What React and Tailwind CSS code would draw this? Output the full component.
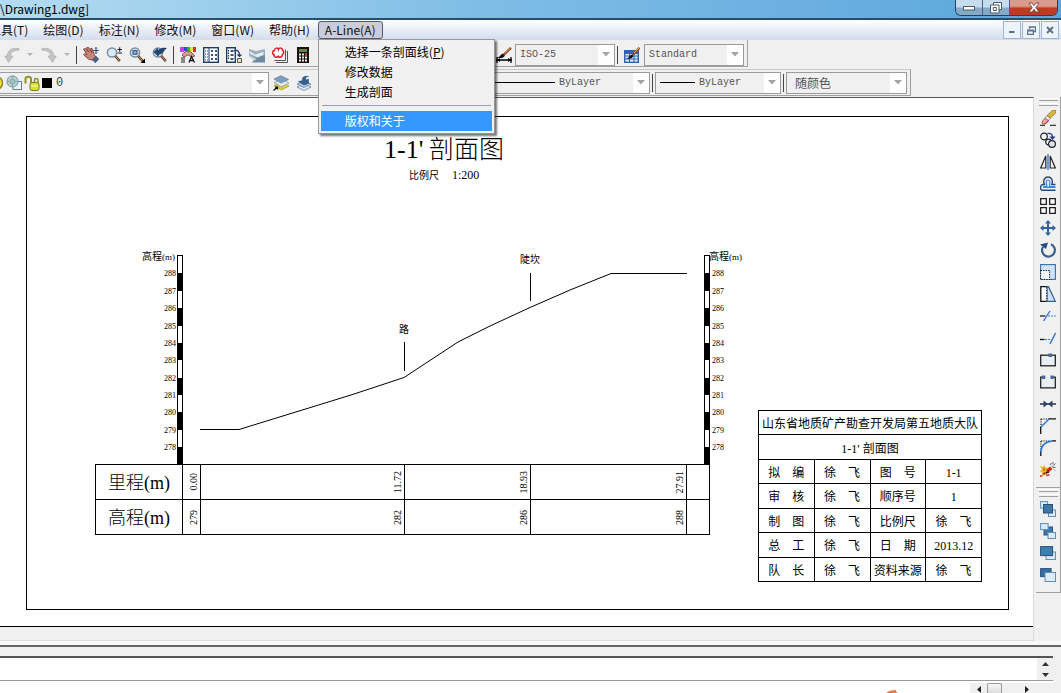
import React from "react";

const ink = "#1d2733";

/* ---------- icons: every one is drawn on a 16 x 16 grid ---------- */

function Icon({ children, size = 16 }) {
  return (
    <svg width={size} height={size} viewBox="0 0 16 16" fill="none" className="shrink-0">
      {children}
    </svg>
  );
}

const Magnifier = () => (
  <>
    <circle cx="6" cy="5.5" r="4.6" fill="#dbe9f4" stroke="#7b8ea0" strokeWidth="1.5" />
    <path d="M9.2 9l4.6 5.2" stroke="#5f4632" strokeWidth="2.6" />
    <path d="M9.6 9.4l3.8 4.2" stroke="#c98d55" strokeWidth="1" />
  </>
);

const icons = {
  undo: (
    <path d="M15 1.500C8 .5 3.500 3 3.300 9H.7l3.800 6.500L9 9H6.500C6.500 5.500 9.500 3 15 3.200z" fill="#c4c4c4" stroke="#a6a6a6" strokeWidth=".6" />
  ),
  redo: (
    <path d="M1 1.500c7-1 11.500 1.500 11.700 7.500h2.600l-3.800 6.500L7 9h2.500C9.500 5.500 6.500 3 1 3.200z" fill="#c4c4c4" stroke="#a6a6a6" strokeWidth=".6" />
  ),
  pan: (
    <>
      <path d="M0.500 2l2-.5 3 3.500L3.500.8l1.800-.6 3.500 5.600L7.500 1.600l1.500-.3 2.300 6.500 1.700 2-3.500 3.400-4-1-5-4.500 1-1 2.500 1.300z" fill="#c98577" stroke="#6d352c" strokeWidth=".8" />
      <path d="M9.500 12.500l3.600-3.200 2.700 3-3.600 3.500z" fill="#46648f" stroke="#2c4468" strokeWidth=".6" />
      <path d="M13 .5v6M10.200 3.500h5.600M12 1.500l1-1 1 1M12 5.500l1 1 1-1" stroke="#2b4a77" strokeWidth="1" />
    </>
  ),
  zoomRealtime: (
    <>
      <Magnifier />
      <path d="M11.500 2.500h4.500M13.700.3v4.400M11.500 6h4.500" stroke={ink} strokeWidth="1.100" />
    </>
  ),
  zoomWindow: (
    <>
      <Magnifier />
      <rect x="4" y="3.600" width="4" height="3.600" fill="#8fb0d4" stroke="#24477c" strokeWidth="1" />
      <path d="M16 11.500V16h-4.500z" fill="#000" />
    </>
  ),
  zoomPrevious: (
    <>
      <Magnifier />
      <path d="M1.500 5L6 .8v2.200c3.500-2.500 6.500-2.500 9-1.800-2.500.8-3 5.300-7.500 6.300L6 9.500z" fill="#24456f" />
    </>
  ),
  properties: (
    <>
      <path d="M0 0h4v5H0z" fill="#d43de0" />
      <path d="M4 0h3v4H4z" fill="#3048e0" />
      <path d="M7 0h3v4H7z" fill="#2eb52e" />
      <path d="M10 0h3v4h-3z" fill="#f0df2a" />
      <path d="M13 0h3v5h-3z" fill="#e62b2b" />
      <path d="M2 8l4-4 5 1 4 4-3 1-4-2-4 2z" fill="#d99a86" stroke="#7f3f33" strokeWidth=".8" />
      <path d="M1 11h4M1 13h4M1 15h4" stroke="#222" strokeWidth="1" />
      <path d="M9 15.500l2.500-6 3 6M10 13.500h3.600" stroke="#111" strokeWidth="1.300" />
    </>
  ),
  designCenter: (
    <>
      <rect x=".7" y=".7" width="14.600" height="14.600" fill="#fff" stroke="#1d3c66" strokeWidth="1.400" />
      <path d="M6 1v14" stroke="#1d3c66" />
      <path d="M2 4h3M2 7h3M2 10h3M2 13h3" stroke="#1d3c66" strokeDasharray="1 1" />
      <path d="M8 3h2v2H8zM12 3h2v2h-2zM8 7h2v2H8zM12 7h2v2h-2zM8 11h2v2H8zM12 11h2v2h-2z" fill="#31578a" />
    </>
  ),
  toolPalettes: (
    <>
      <path d="M.7.7h8.600v14.600H.7z" fill="#fff" stroke="#1d3c66" strokeWidth="1.400" />
      <path d="M2.500 3v10" stroke="#1d3c66" strokeDasharray="1.500 1" />
      <path d="M4.500 3h3v2h-3zM4.500 7h3v2h-3zM4.500 11h3v2h-3z" fill="#31578a" />
      <path d="M8 4c4-2 5.500 1 5.500 5M11.500 7.500l2 2 2-2" stroke="#1d3c66" strokeWidth="1.200" />
      <path d="M11.500 11.500h4v4h-4z" fill="#efe3a5" stroke="#555" />
    </>
  ),
  sheetSet: (
    <>
      <path d="M0 2l7 2 9-2v13H8L0 9z" fill="#9cb3c2" />
      <path d="M0 3l6 4 9-3v4l-6 3-9-4z" fill="#e3eaee" stroke="#8398a8" strokeWidth=".7" />
      <path d="M7 11l9-3v7.500H3z" fill="#6a8ba3" />
      <path d="M0 9l7 4" stroke="#c6d2da" strokeWidth="1.200" />
    </>
  ),
  markup: (
    <>
      <path d="M4 15.500h11.500V4M2.500 13.500h11V2.500" stroke="#555" strokeWidth="1" />
      <path d="M2.500 3.500c0-3 3.500-3 4-1 1-2.500 4.500-1.500 4 1 1.800 1 1.600 3.500-.3 4 .5 2.500-2.700 3.500-4 1.700-1.500 2-4.700 1-4-1.500C-.2 7 0 4 2.500 3.500z" fill="#fff" stroke="#e01f2d" strokeWidth="1.500" />
    </>
  ),
  calculator: (
    <>
      <rect x="2" y="0" width="12" height="16" fill="#1a1010" />
      <rect x="4" y="2" width="8" height="3" fill="#5d8a3c" />
      <path d="M4 7.500h8M4 10.500h8M4 13.500h8" stroke="#f2eded" strokeWidth="1.800" strokeDasharray="2 1" />
      <path d="M10 6.600h2v1.800h-2z" fill="#d23" />
    </>
  ),
  dimStyle: (
    <>
      <path d="M0 13h16M1 10v6M15 10v6" stroke="#000" strokeWidth="1.300" />
      <path d="M1 13l3-2v4zM15 13l-3-2v4z" fill="#000" />
      <path d="M1 10.500c3 0 3-3 6-4l2 2c-2 3-4 3-8 2z" fill="#111" />
      <path d="M8 7.500L15 .8" stroke="#8c4a1e" strokeWidth="2.400" />
      <path d="M9 6l5.500-5" stroke="#e9a35f" strokeWidth=".8" />
    </>
  ),
  tableStyle: (
    <>
      <rect x=".7" y="3.700" width="13.600" height="11.600" fill="#dbe9fa" stroke="#2f62b5" strokeWidth="1.400" />
      <path d="M1 5.500h13" stroke="#2f62b5" strokeWidth="3" />
      <path d="M1 9h13M1 12h13M5.500 5v10M10 5v10" stroke="#2f62b5" />
      <path d="M2 11.500c3 0 3-3 6-4l1.500 1.500c-2 3-4 3-7.500 2.500z" fill="#111" />
      <path d="M8.500 8L15.500.8" stroke="#8c4a1e" strokeWidth="2.400" />
      <path d="M10 6l5-5" stroke="#f0b35f" strokeWidth="1" />
    </>
  ),
  sun: (
    <circle cx="8" cy="8" r="6.500" fill="#f4e13c" stroke="#8e8b2f" strokeWidth="1.600" />
  ),
  freeze: (
    <>
      <rect x="7" y="6.500" width="8.500" height="8" fill="#eef3f6" stroke="#69829a" />
      <circle cx="6.500" cy="6.500" r="5.500" fill="#b9d6cf" stroke="#8fa9b5" strokeWidth="1.300" />
      <circle cx="6.500" cy="6.500" r="2.600" fill="#9cc4bb" stroke="#7fa5ac" strokeWidth=".9" />
      <path d="M6.500 1.500v2M6.500 9.500v2M1.500 6.500h2M9.500 6.500h2" stroke="#7198a5" strokeWidth=".9" />
    </>
  ),
  unlock: (
    <>
      <path d="M1.500 8.500V4C1.500 1 7 1 7 4v5" stroke="#8f9428" strokeWidth="2" />
      <rect x="6" y="7.500" width="9" height="8" rx="2" fill="#d7df31" stroke="#767b1e" />
      <path d="M10.500 7.500V5c0-2 3.500-2 3.500 0v3" stroke="#8f9428" strokeWidth="1.600" />
      <path d="M7 11h7" stroke="#f7f8a3" strokeWidth="1.200" />
    </>
  ),
  layerManager: (
    <>
      <path d="M1 10.500L9 7l7 4-7.500 4z" fill="#e3cf2f" stroke="#9c8c16" strokeWidth=".6" />
      <path d="M1 7.500L9 4l7 4-7.500 4z" fill="#dfeaf5" stroke="#67829f" strokeWidth=".6" />
      <path d="M1 4L8 .7l7.500 3.800L8 8z" fill="#7f9fbe" stroke="#4f6f90" strokeWidth=".6" />
      <path d="M.5 15.500L4.500 12M2 12h2.500v2.500" stroke="#000" strokeWidth="1.200" />
    </>
  ),
  layerPrevious: (
    <>
      <path d="M1 12l7-3.500 7 3.500-7 3.500z" fill="#dfeaf5" stroke="#67829f" strokeWidth=".8" />
      <path d="M1 9l7-3.500L15 9l-7 3.500z" fill="#b7cde2" stroke="#67829f" strokeWidth=".8" />
      <path d="M2.500 6.500L7 5.500C5 3 8 .5 12.500 1.500c-3 .3-3.500 2-2 3.500L12.500 4v4.500L8 10z" fill="#33608f" stroke="#234468" strokeWidth=".5" />
    </>
  ),

  erase: (
    <>
      <path d="M0 15.300h16" stroke="#111" strokeWidth="1" strokeDasharray="5 5 6" />
      <path d="M2 12l3-4 3.500 2.500-3 3.500H2.500z" fill="#f3a7a2" stroke="#9d3f3a" strokeWidth=".8" />
      <path d="M5 8l2-2.500L10.300 8 8.500 10.500z" fill="#eee" stroke="#555" strokeWidth=".6" />
      <path d="M7 5.500L13 0h3v2.500L10.300 8z" fill="#d9b83a" stroke="#7d661a" strokeWidth=".7" />
      <path d="M5 13.500l4-3" stroke="#d22" />
    </>
  ),
  copy: (
    <>
      <circle cx="4" cy="4.500" r="3.300" stroke="#222" strokeWidth="1.200" fill="#edf2f6" />
      <circle cx="8.500" cy="10" r="2.800" stroke="#222" strokeWidth="1.200" fill="#edf2f6" />
      <circle cx="12" cy="12" r="3.400" stroke="#222" strokeWidth="1.200" fill="#dce5ee" />
      <path d="M7.500 1.500c3-.5 5 .5 5 4" stroke="#1f3c8a" strokeWidth="1.400" />
      <path d="M9.500 4.500h6l-3 3.500z" fill="#1f3c8a" />
    </>
  ),
  mirror: (
    <>
      <path d="M5.800 2v12H.7zM10.200 2v12h5.100z" fill="#f4f6f8" stroke="#222" strokeWidth="1.200" />
      <path d="M8 0v16" stroke="#2a6fd0" strokeWidth="1.300" />
    </>
  ),
  offset: (
    <>
      <path d="M15.500 14.300H2.500C-.3 14.300 0 8.500 3 8.500h1.500C2.500 4 5 1 8 1s5.500 3 3.800 7.500h3.700" stroke="#27486e" strokeWidth="1.400" />
      <path d="M15.500 11.500H4c-.8 0-.8-.8 0-.8h3C6 6.500 5.800 4 8 4s2.300 2.500 1.300 6.700h6.200" stroke="#2e86e8" strokeWidth="1.200" />
    </>
  ),
  array: (
    <path d="M.7.7h5.600v5.600H.7zM9.700.7h5.600v5.600H9.700zM.7 9.700h5.600v5.600H.7zM9.700 9.700h5.600v5.600H9.700z" fill="#fff" stroke="#222" strokeWidth="1.300" />
  ),
  move: (
    <path d="M8 0l3 3.500H9v3.500h3.500V5L16 8l-3.500 3V9H9v3.500h2L8 16l-3-3.500h2V9H3.500v2L0 8l3.500-3v2H7V3.500H5z" fill="#33619b" />
  ),
  rotate: (
    <>
      <path d="M11 2.300A6.400 6.400 0 1 1 3 4.800" stroke="#37608f" strokeWidth="2.200" />
      <path d="M0 2.500L8 .5 6 7z" fill="#254b80" />
    </>
  ),
  scale: (
    <>
      <rect x=".6" y=".6" width="14.800" height="14.800" fill="#cfe3f6" stroke="#3a6ea5" strokeWidth="1.100" />
      <rect x=".6" y="6.500" width="9" height="9" fill="#f3f6f8" stroke="#111" strokeWidth="1.100" strokeDasharray="1.300 1.200" />
    </>
  ),
  stretch: (
    <>
      <path d="M7 .7h1.500l6.800 14.600H7z" fill="#cfe3f6" stroke="#2e5f98" strokeWidth="1.200" />
      <path d="M6.700.7H.8v14.600h5.900" fill="#fff" stroke="#111" strokeWidth="1.300" />
      <path d="M6.700 1v14" stroke="#111" strokeDasharray="1.500 1.200" />
    </>
  ),
  trim: (
    <>
      <path d="M0 8h5.500" stroke="#111" strokeWidth="1.200" />
      <path d="M8 8h8" stroke="#2a7ad8" strokeWidth="1.200" strokeDasharray="2 1.200" />
      <path d="M3.500 13L10 3" stroke="#2a6fc8" strokeWidth="1.300" />
    </>
  ),
  extend: (
    <>
      <path d="M0 9.500h4.500" stroke="#111" strokeWidth="1.300" />
      <path d="M5 9.500h6" stroke="#2a7ad8" strokeWidth="1.200" strokeDasharray="2 1.200" />
      <path d="M10 14l5.500-11" stroke="#2a6fc8" strokeWidth="1.400" />
    </>
  ),
  breakAtPoint: (
    <>
      <rect x=".7" y="3.200" width="14.600" height="10.600" fill="#e9eef4" stroke="#222" strokeWidth="1.300" />
      <path d="M8.500 1.500h3.500v3.500H8.500z" fill="#4a679a" />
    </>
  ),
  breakLine: (
    <>
      <path d="M3 3.200H.7v10.600h14.600V3.200H13" fill="#e9eef4" stroke="#222" strokeWidth="1.300" />
      <path d="M2 1.500h3.300v3.500H2zM10.500 1.500h3.300v3.500h-3.300z" fill="#4a679a" />
    </>
  ),
  join: (
    <>
      <path d="M0 8h16" stroke="#222" strokeWidth="1.400" />
      <path d="M3.500 4.500L8 8l-4.500 3.500zM12.500 4.500L8 8l4.500 3.500z" fill="#28466f" />
    </>
  ),
  chamfer: (
    <>
      <path d="M1 1h9M1 1v9" stroke="#111" strokeWidth="1.200" strokeDasharray="1.200 1.200" />
      <path d="M.7 16V9M9 .9h7" stroke="#111" strokeWidth="1.300" />
      <path d="M1 9l8-8" stroke="#2a7ad8" strokeWidth="1.500" />
    </>
  ),
  fillet: (
    <>
      <path d="M1 1h9M1 1v9" stroke="#111" strokeWidth="1.200" strokeDasharray="1.200 1.200" />
      <path d="M.8 16v-5M12 .9h4" stroke="#111" strokeWidth="1.300" />
      <path d="M1 12C1 6 5 2 12 1" stroke="#2a7ad8" strokeWidth="1.600" />
    </>
  ),
  explode: (
    <>
      <path d="M0 4l3 1 1.500-2L6 6l3-1-1 3 1 2-2 1 1 3-3-1.500L2 15l.5-4L0 9l2-1.500z" fill="#e8b62a" />
      <path d="M3 6l2 1-1 2zM2 12l3-2v3zM6 12l2 1-1 2z" fill="#c8281c" />
      <path d="M6 8.500l4-4 2.500 2.500-4.500 4z" fill="#c8281c" />
      <path d="M5.500 11l3.500-1" stroke="#3a1d10" strokeWidth="1.500" />
      <path d="M10 3l1.500-2M13 0v2.500M15.500 1.500l-2 2M15.500 5.500l-2-.5M11.500 4l2.500 2M14 7.500l1 1" stroke="#555" strokeWidth=".9" />
      <path d="M0 14h2M8 13h1.500" stroke="#c8281c" strokeWidth="1.500" />
    </>
  ),
  bringFront: (
    <>
      <rect x=".6" y=".6" width="7" height="6.500" fill="#dcebf6" stroke="#5f8fb8" />
      <rect x="8.500" y="9" width="7" height="6.500" fill="#dcebf6" stroke="#5f8fb8" />
      <rect x="3.500" y="3.500" width="9" height="8.500" fill="#3f76a8" stroke="#28527c" />
    </>
  ),
  sendBack: (
    <>
      <rect x="4" y="4" width="8.500" height="8" fill="#3f76a8" stroke="#28527c" />
      <rect x=".6" y=".6" width="7.500" height="6" fill="#dcebf6" stroke="#5f8fb8" />
      <rect x="8" y="9.500" width="7.500" height="6" fill="#dcebf6" stroke="#5f8fb8" />
    </>
  ),
  bringAbove: (
    <>
      <rect x="6" y="7" width="9.500" height="7.500" fill="#dcebf6" stroke="#5f8fb8" />
      <rect x=".6" y="1.600" width="12" height="9" fill="#3f7fae" stroke="#28527c" />
    </>
  ),
  sendUnder: (
    <>
      <rect x=".6" y="1.600" width="10.500" height="8" fill="#3a6a9e" stroke="#28527c" />
      <rect x="5" y="5.500" width="10.500" height="9" fill="#dcebf6" stroke="#5f8fb8" />
    </>
  ),
};

function ToolButton({ icon, label }) {
  return (
    <button type="button" aria-label={label} className="flex h-[22px] w-[23px] shrink-0 items-center justify-center">
      <Icon>{icons[icon]}</Icon>
    </button>
  );
}

function CaretButton({ label }) {
  return (
    <button type="button" aria-label={label} className="flex h-[22px] w-[14px] shrink-0 items-center justify-center">
      <svg width="6" height="3" viewBox="0 0 6 3"><path d="M0 0h6L3 3z" fill="#b5b5b5" /></svg>
    </button>
  );
}

const Divider = () => <div className="mx-[2px] h-[18px] w-px shrink-0 bg-[#444]" />;

function Combo({ label, value, width, line, cjk }) {
  return (
    <div className={"flex h-[22px] shrink-0 items-center border border-[#9b9b9b] bg-white " + width}>
      <div className="flex h-full min-w-0 flex-1 items-center bg-[#f0f0f0] pl-1">
        {line && <div className={"mr-1 h-px shrink-0 bg-black " + line} />}
        <select
          aria-label={label}
          className={
            "min-w-0 flex-1 appearance-none bg-transparent text-[#555] outline-none " +
            (cjk ? "pl-1 font-['Noto_Sans_CJK_SC',sans-serif] text-[12px]" : "font-['Liberation_Mono',monospace] text-[10px]")
          }
        >
          <option>{value}</option>
        </select>
      </div>
      <svg width="16" height="5" viewBox="0 0 16 5" className="shrink-0"><path d="M4 0h8L8 4.500z" fill="#a3a3a3" /></svg>
    </div>
  );
}

/* ---------- title bar and menus ---------- */

function TitleBar() {
  return (
    <header className="flex h-5 shrink-0 items-start justify-between border-b-2 border-[#2b4d6c] bg-linear-to-r from-[#b4dcf1] via-[#7fbde6] via-45% to-[#5ba5dc]">
      <h1 className="min-w-0 flex-1 truncate text-[12px] leading-[17px] text-black">\Drawing1.dwg]</h1>
      <div className="mr-[3px] flex h-4 overflow-hidden rounded-b-md border border-t-0 border-[#25415c]">
        <button type="button" aria-label="最小化" className="flex w-[27px] items-center justify-center border-r border-[#47637d] bg-linear-to-b from-[#c5dcec] from-45% to-[#84a9c8] to-55%">
          <svg width="12" height="6" viewBox="0 0 12 6"><rect x=".5" y="1.500" width="11" height="3.500" fill="#fff" stroke="#4c5a68" /></svg>
        </button>
        <button type="button" aria-label="还原" className="flex w-[27px] items-center justify-center border-r border-[#47637d] bg-linear-to-b from-[#c5dcec] from-45% to-[#84a9c8] to-55%">
          <svg width="12" height="12" viewBox="0 0 12 12" fill="#fff" stroke="#4c5a68">
            <path d="M3.500.5h8v7h-8z" /><path d="M.5 3h8.500v8H.5z" /><path d="M3.300 5.500h3v3h-3z" />
          </svg>
        </button>
        <button type="button" aria-label="关闭" className="flex w-[47px] items-center justify-center bg-linear-to-b from-[#dc9a8c] from-40% to-[#bf3a1f] to-55%">
          <svg width="12" height="11" viewBox="0 0 12 11"><path d="M1 1h3l2 2.600L8 1h3L7.800 5.500 11 10H8L6 7.400 4 10H1l3.200-4.500z" fill="#fff" stroke="#6b3a34" strokeWidth=".8" /></svg>
        </button>
      </div>
    </header>
  );
}

const menus = ["工具(T)", "绘图(D)", "标注(N)", "修改(M)", "窗口(W)", "帮助(H)"];
const mdiButton = "flex h-[18px] w-[18px] items-center justify-center border border-[#9fb6cc] bg-[#edf3fb]";

function MenuBar() {
  return (
    <div className="flex h-5 shrink-0 items-center justify-between bg-linear-to-b from-white via-[#e8edf7] to-[#d3dcee] text-[12px] leading-[18px] text-[#111]">
      <nav className="-ml-[18px] flex items-center gap-px">
        {menus.map((m) => (
          <button key={m} type="button" className="shrink-0 px-[7px] whitespace-nowrap">{m}</button>
        ))}
        <div className="relative">
          <button type="button" aria-expanded="true" className="block h-[18px] rounded-[3px] border border-[#555a68] bg-[#c9cddb] px-[6px] leading-4 whitespace-nowrap">
            A-Line(A)
          </button>
          <div role="menu" className="absolute top-[18px] left-0 z-10 w-[177px] border border-[#979797] bg-[#f1f1f1] px-[2px] pt-[2px] pb-[2px] shadow-[2px_2px_2px_rgba(0,0,0,0.55)]">
            <MenuItem>选择一条剖面线(<u>P</u>)</MenuItem>
            <MenuItem>修改数据</MenuItem>
            <MenuItem>生成剖面</MenuItem>
            <hr className="mx-px mt-[3px] mb-[5px] border-[#a0a0a0]" />
            <MenuItem active>版权和关于</MenuItem>
          </div>
        </div>
      </nav>
      <div className="mr-[2px] flex gap-px">
        <button type="button" aria-label="最小化图形" className={mdiButton}>
          <svg width="8" height="8" viewBox="0 0 8 8"><path d="M1 6h5.500" stroke="#5c7288" strokeWidth="2" /></svg>
        </button>
        <button type="button" aria-label="还原图形" className={mdiButton}>
          <svg width="9" height="9" viewBox="0 0 9 9" fill="none" stroke="#5c7288"><path d="M2.500 3V1h6v4.500H6.500" strokeWidth="1.300" /><path d="M.6 4h5.800v4.400H.6zM.6 4.800h5.800" strokeWidth="1.200" /></svg>
        </button>
        <button type="button" aria-label="关闭图形" className={mdiButton}>
          <svg width="8" height="8" viewBox="0 0 8 8"><path d="M1 1l6 6M7 1L1 7" stroke="#5c7288" strokeWidth="2" /></svg>
        </button>
      </div>
    </div>
  );
}

function MenuItem({ active, children }) {
  return (
    <button
      type="button"
      role="menuitem"
      className={"block h-5 w-full pl-6 text-left leading-5 whitespace-nowrap " + (active ? "bg-[#3399ff] text-white" : "text-black")}
    >
      {children}
    </button>
  );
}

/* ---------- toolbars ---------- */

function Toolbars() {
  return (
    <div className="shrink-0 bg-[#f0f0f0]">
      <div className="flex h-[27px] w-fit items-center border-r border-b border-[#a0a0a0] pt-[3px] pr-[3px]">
        <ToolButton icon="undo" label="放弃" />
        <CaretButton label="放弃列表" />
        <ToolButton icon="redo" label="重做" />
        <CaretButton label="重做列表" />
        <Divider />
        <ToolButton icon="pan" label="实时平移" />
        <ToolButton icon="zoomRealtime" label="实时缩放" />
        <ToolButton icon="zoomWindow" label="窗口缩放" />
        <ToolButton icon="zoomPrevious" label="缩放上一个" />
        <Divider />
        <ToolButton icon="properties" label="特性" />
        <ToolButton icon="designCenter" label="设计中心" />
        <ToolButton icon="toolPalettes" label="工具选项板" />
        <ToolButton icon="sheetSet" label="图纸集管理器" />
        <ToolButton icon="markup" label="标记集管理器" />
        <ToolButton icon="calculator" label="快速计算器" />
        <div className="w-[178px] shrink-0" />
        <ToolButton icon="dimStyle" label="标注样式" />
        <Combo label="标注样式控制" value="ISO-25" width="w-[100px]" />
        <Divider />
        <ToolButton icon="tableStyle" label="表格样式" />
        <Combo label="表格样式控制" value="Standard" width="w-[100px] ml-px" />
      </div>
      <div className="mt-[2px] flex h-[27px] w-fit items-center border-t border-r border-b border-t-[#c8c8c8] border-[#a0a0a0] pr-[3px]">
        <div className="flex h-[22px] w-[269px] shrink-0 items-center border border-l-0 border-[#9b9b9b] bg-white">
          <div className="flex h-full flex-1 items-center overflow-hidden bg-[#f0f0f0]">
            <div className="-ml-[12px] flex items-center gap-[2px]">
              <Icon>{icons.sun}</Icon>
              <Icon>{icons.freeze}</Icon>
              <Icon>{icons.unlock}</Icon>
              <div className="h-[10px] w-[10px] bg-black" />
            </div>
            <select aria-label="图层控制" className="ml-1 min-w-0 flex-1 appearance-none bg-transparent font-['Liberation_Mono',monospace] text-[12px] text-[#444] outline-none">
              <option>0</option>
            </select>
          </div>
          <svg width="16" height="5" viewBox="0 0 16 5" className="shrink-0"><path d="M4 0h8L8 4.500z" fill="#a3a3a3" /></svg>
        </div>
        <ToolButton icon="layerManager" label="图层特性管理器" />
        <ToolButton icon="layerPrevious" label="上一个图层" />
        <div className="w-[165px] shrink-0" />
        <Combo label="线型控制" value="ByLayer" width="w-[170px]" line="w-[70px]" />
        <Divider />
        <Combo label="线宽控制" value="ByLayer" width="w-[126px]" line="w-[35px]" />
        <Divider />
        <Combo label="打印样式控制" value="随颜色" width="w-[121px]" cjk />
      </div>
    </div>
  );
}

const modifyTools = [
  ["erase", "删除"], ["copy", "复制"], ["mirror", "镜像"], ["offset", "偏移"], ["array", "阵列"],
  ["move", "移动"], ["rotate", "旋转"], ["scale", "缩放"], ["stretch", "拉伸"], ["trim", "修剪"],
  ["extend", "延伸"], ["breakAtPoint", "打断于点"], ["breakLine", "打断"], ["join", "合并"],
  ["chamfer", "倒角"], ["fillet", "圆角"], ["explode", "分解"],
];
const orderTools = [["bringFront", "前置"], ["sendBack", "后置"], ["bringAbove", "置于对象之上"], ["sendUnder", "置于对象之下"]];

const Grip = () => (
  <div className="my-px flex w-[19px] flex-col gap-[2px]">
    <div className="h-[3px] border-t border-b border-t-white border-b-[#a0a0a0]" />
    <div className="h-[3px] border-t border-b border-t-white border-b-[#a0a0a0]" />
  </div>
);

function ToolColumn({ tools }) {
  return (
    <div className="flex flex-col items-center border-r border-b border-[#a0a0a0] pb-[6px]">
      <Grip />
      {tools.map(([icon, label]) => <ToolButton key={icon} icon={icon} label={label} />)}
    </div>
  );
}

/* ---------- drawing ---------- */

const levels = [288, 287, 286, 285, 284, 283, 282, 281, 280, 279, 278];
const levelY = (v) => Math.round(464.5 - (v - 277) * 17.37);

function ElevationScale({ x, labelX }) {
  return (
    <g>
      <rect x={x + 0.5} y="255.5" width="5" height="209" fill="#fff" stroke="#000" />
      {levels.filter((v) => v % 2 === 0).map((v) => (
        <rect key={v} x={x} y={levelY(v)} width="6" height={levelY(v - 1) - levelY(v)} fill="#000" />
      ))}
      {levels.map((v) => (
        <text key={v} x={labelX} y={levelY(v) + 3} fontSize="8">{v}</text>
      ))}
    </g>
  );
}

function Profile() {
  return (
    <svg width="1033" height="528" viewBox="0 98 1033 528" className="absolute top-0 left-0 font-['Liberation_Serif','Noto_Sans_CJK_SC',serif]" fill="#000">
      <text x="384" y="158" fontSize="26">1-1'</text>
      <text x="429" y="158" fontSize="25" fontWeight="300">剖面图</text>
      <text x="409" y="179" fontSize="10">比例尺</text>
      <text x="452" y="179" fontSize="12">1:200</text>

      <text x="142" y="260" fontSize="10">高程</text>
      <text x="162" y="260" fontSize="9">(m)</text>
      <text x="709" y="260" fontSize="10">高程</text>
      <text x="729" y="260" fontSize="9">(m)</text>
      <ElevationScale x={177} labelX={164} />
      <ElevationScale x={704} labelX={712} />

      <polyline
        points="200,429.500 239,429.500 351,395 404,377.500 458,342 490,326 530,307.500 570,290 611,273.500 687,273.500"
        fill="none"
        stroke="#000"
      />
      <path d="M404.500 342v29M530.500 273v28" stroke="#000" />
      <text x="399" y="333" fontSize="10">路</text>
      <text x="520" y="263" fontSize="10">陡坎</text>
    </svg>
  );
}

const stationRows = [
  ["里程", ["0.00", "11.72", "18.93", "27.91"]],
  ["高程", ["279", "282", "286", "288"]],
];

function StationTable() {
  return (
    <table className="absolute top-[366px] left-[95px] w-[615px] table-fixed border-collapse">
      <colgroup>
        <col className="w-[87px]" /><col className="w-[18px]" /><col className="w-[204px]" />
        <col className="w-[126px]" /><col className="w-[156px]" /><col className="w-[23px]" />
      </colgroup>
      <tbody>
        {stationRows.map(([name, values]) => (
          <tr key={name} className="h-[35px]">
            <th scope="row" className="border border-black p-0 pt-[2px] text-center font-['Liberation_Serif','Noto_Sans_CJK_SC',serif] text-[18px] leading-[18px] font-light">
              {name}(m)
            </th>
            {values.map((v) => (
              <td key={v} className="border border-black p-0 align-middle">
                <span className="ml-auto block w-3 rotate-180 text-center font-['Liberation_Serif',serif] text-[10px] leading-3 [writing-mode:vertical-rl]">{v}</span>
              </td>
            ))}
            <td className="border border-black p-0" />
          </tr>
        ))}
      </tbody>
    </table>
  );
}

const blockRows = [
  ["拟　编", "徐　飞", "图　号", "1-1"],
  ["审　核", "徐　飞", "顺序号", "1"],
  ["制　图", "徐　飞", "比例尺", "徐　飞"],
  ["总　工", "徐　飞", "日　期", "2013.12"],
  ["队　长", "徐　飞", "资料来源", "徐　飞"],
];
const blockCell = "border border-black p-0 pt-[3px] text-center font-normal whitespace-nowrap";

function TitleBlock() {
  return (
    <table className="absolute top-[312px] left-[758px] h-[172px] w-[224px] table-fixed border-collapse font-['Liberation_Serif','Noto_Sans_CJK_SC',serif] text-[12px] leading-4">
      <tbody>
        <tr className="h-6"><th colSpan={4} className={blockCell}>山东省地质矿产勘查开发局第五地质大队</th></tr>
        <tr className="h-6"><th colSpan={4} className={blockCell}>1-1′ 剖面图</th></tr>
        {blockRows.map((row) => (
          <tr key={row[0]} className="h-6">
            {row.map((text, i) => <td key={i} className={blockCell}>{text}</td>)}
          </tr>
        ))}
      </tbody>
    </table>
  );
}

function DrawingArea() {
  return (
    <main className="flex min-w-0 flex-1 flex-col border-t border-r border-[#555] border-r-[#d9d9d9] bg-[#f0f0f0]">
      <div className="relative flex min-h-0 flex-1 overflow-hidden border-b border-black bg-white pt-[18px] pr-6 pb-4 pl-[26px]">
        <div className="flex-1 border border-black" />
        <Profile />
        <StationTable />
        <TitleBlock />
      </div>
      <div className="h-[14px] shrink-0 border-b border-[#dedede]" />
    </main>
  );
}

/* ---------- command window ---------- */

function CommandWindow() {
  return (
    <footer className="flex h-12 shrink-0 flex-col overflow-hidden border-t-2 border-[#666] bg-[#f0f0f0] pt-[9px]">
      <div className="mr-2 flex h-[25px] shrink-0 border-t-2 border-b border-t-[#555] border-b-[#999] bg-white">
        <input aria-label="命令" className="min-w-0 flex-1 bg-white px-1 text-[12px] outline-none" />
        <div className="flex w-4 flex-col bg-[#f0f0f0]">
          <button type="button" aria-label="向上滚动" className="flex flex-1 items-center justify-center">
            <svg width="7" height="4" viewBox="0 0 7 4"><path d="M3.500 0L7 4H0z" fill="#333" /></svg>
          </button>
          <button type="button" aria-label="向下滚动" className="flex flex-1 items-center justify-center">
            <svg width="7" height="4" viewBox="0 0 7 4"><path d="M3.500 4L7 0H0z" fill="#333" /></svg>
          </button>
        </div>
      </div>
      <div className="mr-2 flex flex-1 items-end justify-end bg-white">
        <svg width="12" height="3" viewBox="0 0 12 3" className="mr-[72px]"><path d="M0 3c2-2 6-3 10-3v1.500L12 3z" fill="#ee7a4a" /></svg>
        <div className="flex h-[10px] items-start bg-[#f0f0f0]">
          <button type="button" aria-label="向左滚动" className="flex h-[10px] w-[17px] items-end justify-center">
            <svg width="4" height="7" viewBox="0 0 4 7"><path d="M0 3.500L4 0v7z" fill="#222" /></svg>
          </button>
          <div className="h-[10px] w-[15px] rounded-t-[2px] border border-b-0 border-[#999] bg-linear-to-b from-[#f7f7f7] to-[#dcdcdc]" />
          <button type="button" aria-label="向右滚动" className="ml-4 flex h-[10px] w-[17px] items-end justify-center">
            <svg width="4" height="7" viewBox="0 0 4 7"><path d="M4 3.500L0 0v7z" fill="#222" /></svg>
          </button>
          <div className="w-[18px]" />
        </div>
      </div>
    </footer>
  );
}

export default function App() {
  return (
    <div className="flex h-screen flex-col overflow-hidden bg-[#f0f0f0] font-['Noto_Sans_CJK_SC',sans-serif]">
      <TitleBar />
      <MenuBar />
      <Toolbars />
      <div className="mt-px flex min-h-0 flex-1 border-b-4 border-[#f9f9f9]">
        <DrawingArea />
        <aside className="ml-[2px] w-[25px] shrink-0">
          <ToolColumn tools={modifyTools} />
          <ToolColumn tools={orderTools} />
        </aside>
      </div>
      <CommandWindow />
    </div>
  );
}
